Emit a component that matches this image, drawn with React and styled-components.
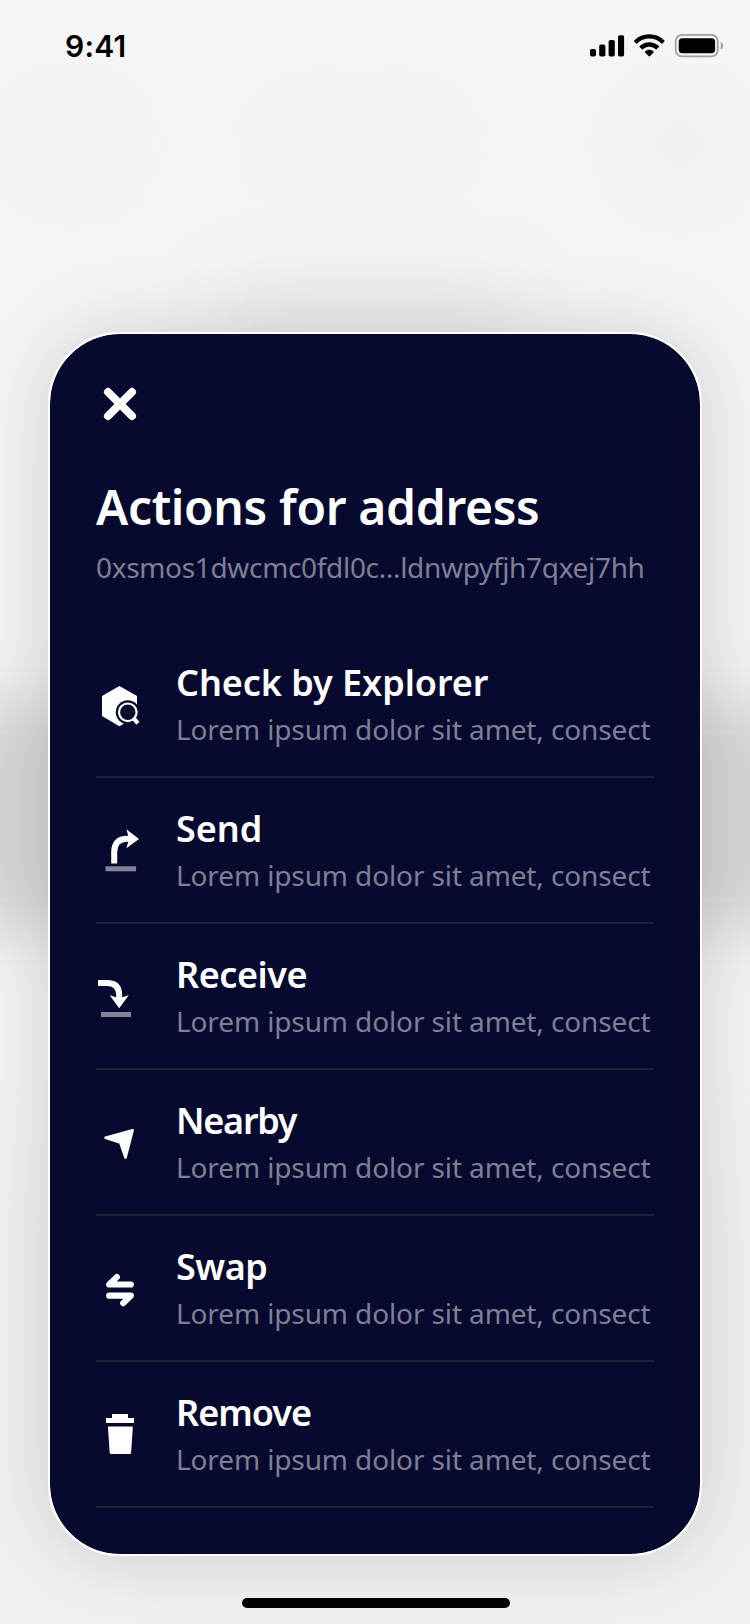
import React from "react";
import styled, { createGlobalStyle } from "styled-components";

const GlobalStyle = createGlobalStyle`
  *, *::before, *::after { box-sizing: border-box; }
  body { margin: 0; background: #f5f5f5; }
`;

const Screen = styled.main`
  position: relative;
  display: flex;
  flex-direction: column;
  width: 750px;
  height: 1624px;
  overflow: hidden;
  background: #f5f5f5;
  font-family: "Noto Sans", "Open Sans", sans-serif;
`;

/* Soft, out-of-focus content of the page that lies under the sheet. */
const Backdrop = styled.div`
  position: absolute;
  inset: 0;
  overflow: hidden;
`;

const Blob = styled.div`
  position: absolute;
  left: ${(p) => p.$x}px;
  top: ${(p) => p.$y}px;
  width: ${(p) => p.$w}px;
  height: ${(p) => p.$h}px;
  border-radius: ${(p) => p.$r || 0}px;
  background: ${(p) => p.$color};
  filter: blur(${(p) => p.$blur}px);
`;

const StatusBar = styled.header`
  position: relative;
  display: flex;
  align-items: center;
  justify-content: space-between;
  height: 92px;
  padding: 0 26px 0 65px;
`;

const Time = styled.time`
  color: #000;
  font: 600 30px/36px Inter, sans-serif;
  letter-spacing: 0.2px;
`;

const StatusIcons = styled.svg`
  display: block;
  width: 134px;
  height: 24px;
`;

const Sheet = styled.section`
  position: relative;
  width: 654px;
  height: 1224px;
  margin: 240px 48px 0;
  padding: 46px;
  border: 2px solid #fff;
  border-radius: 72px;
  background: #08092e;
  background-clip: padding-box;
  box-shadow: 0 0 80px rgba(0, 0, 0, 0.16);
`;

const CloseButton = styled.button`
  display: block;
  width: 48px;
  height: 48px;
  padding: 0;
  border: 0;
  background: none;
  color: #fff;
`;

const Title = styled.h1`
  margin: 49px 0 0;
  color: #fff;
  font-size: 48px;
  font-weight: 600;
  line-height: 60px;
  letter-spacing: -0.35px;
  white-space: nowrap;
`;

const Address = styled.p`
  margin: 10px 0 0;
  color: #7e7f94;
  font-size: 28px;
  font-weight: 400;
  line-height: 40px;
  letter-spacing: -0.33px;
  white-space: nowrap;
`;

const ActionList = styled.ul`
  margin: 45px 0 0;
  padding: 0;
  list-style: none;
`;

const ActionRow = styled.li`
  display: grid;
  grid-template-columns: 80px 1fr;
  height: 146px;
  padding-top: 29px;
  border-bottom: 2px solid #1f1f35;
`;

const ActionIcon = styled.svg`
  display: block;
  width: 48px;
  height: 48px;
  margin-top: 21px;
  overflow: visible;
`;

const ActionTitle = styled.h2`
  margin: 0;
  color: #fff;
  font-size: 36px;
  font-weight: 600;
  line-height: 44px;
  letter-spacing: ${(p) => p.$tracking}px;
  white-space: nowrap;
`;

const ActionText = styled.p`
  margin: 2px 0 0;
  color: #7e7f94;
  font-size: 28px;
  font-weight: 400;
  line-height: 44px;
  letter-spacing: -0.12px;
  white-space: nowrap;
`;

const HomeIndicator = styled.div`
  position: relative;
  width: 268px;
  height: 10px;
  margin: 42px 0 0 242px;
  border-radius: 5px;
  background: #000;
`;

const icons = {
  explorer: (
    <>
      <path fill="#fff" d="M23.4 4 41 14v20L23.4 44.3 6 34V14z" />
      <circle cx="31.8" cy="30.3" r="12" fill="#08092e" />
      <path d="m38 36.5 5 5" stroke="#08092e" strokeWidth="8" />
      <circle cx="31.8" cy="30.3" r="8.8" fill="none" stroke="#fff" strokeWidth="2.2" />
      <path d="m37.5 36 4.4 5.4" stroke="#fff" strokeWidth="4.2" />
    </>
  ),
  send: (
    <>
      <path fill="none" stroke="#fff" strokeWidth="6" d="M18.2 35.4V24q0-13.2 13-13.2h3" />
      <path fill="#fff" d="M30.4 1.3 43 11 30.4 20.3l2.7-9.5z" />
      <path fill="#83849a" d="M9.5 38.3h30.6v5H9.5z" />
    </>
  ),
  receive: (
    <>
      <path fill="none" stroke="#fff" strokeWidth="6" d="M2 9h8.8q12.4 0 12.4 12V26" />
      <path fill="#fff" d="m13.7 21.2 9.5 3 9.5-3L23.2 34.2z" />
      <path fill="#83849a" d="M5 38h30v5H5z" />
    </>
  ),
  nearby: (
    <path
      fill="#fff"
      stroke="#fff"
      strokeWidth="2.6"
      strokeLinejoin="round"
      d="M9.5 17.7 36.6 10.3 29.5 37.6 24.2 22.4z"
    />
  ),
  swap: (
    <>
      <path fill="none" stroke="#fff" strokeWidth="6.2" strokeLinecap="round" strokeLinejoin="round" d="M34.8 18.5H13.2l7.6-7.4" />
      <path fill="none" stroke="#fff" strokeWidth="6.2" strokeLinecap="round" strokeLinejoin="round" d="M13.2 29.7h21.6l-7.6 7.4" />
    </>
  ),
  remove: (
    <>
      <path fill="#fff" d="M16 2h16v4h6v5H10V6h6z" />
      <path fill="#fff" d="M12 14.5h23.7q1.2 0 1.1 1.2l-1.7 25q-.1 1.3-1.5 1.3H15.2q-1.4 0-1.5-1.3l-1.7-25q-.1-1.2 0-1.2z" />
    </>
  ),
};

const description = "Lorem ipsum dolor sit amet, consect";

const actions = [
  { icon: "explorer", title: "Check by Explorer", tracking: -0.05 },
  { icon: "send", title: "Send", tracking: -0.05 },
  { icon: "receive", title: "Receive", tracking: -0.45 },
  { icon: "nearby", title: "Nearby", tracking: -1.25 },
  { icon: "swap", title: "Swap", tracking: -0.5 },
  { icon: "remove", title: "Remove", tracking: -1 },
];

export default function App() {
  return (
    <Screen>
      <GlobalStyle />
      <Backdrop>
        <Blob $x={40} $y={110} $w={68} $h={68} $r={34} $color="#f0f0f0" $blur={30} />
        <Blob $x={280} $y={118} $w={160} $h={50} $r={25} $color="#efefef" $blur={26} />
        <Blob $x={645} $y={110} $w={70} $h={70} $r={35} $color="#ececec" $blur={30} />
        <Blob $x={225} $y={280} $w={290} $h={80} $color="#e9e9ec" $blur={34} />
        <Blob $x={-100} $y={701} $w={950} $h={230} $color="#d6d6da" $blur={32} />
        <Blob $x={-100} $y={1150} $w={950} $h={620} $color="#f1f1f1" $blur={40} />
      </Backdrop>
      <StatusBar>
        <Time>9:41</Time>
        <StatusIcons viewBox="590 34 134 24">
          <rect x="590" y="49" width="6" height="7.6" rx="1.8" />
          <rect x="599.2" y="44.6" width="6.2" height="12" rx="1.8" />
          <rect x="608.6" y="40" width="6.2" height="16.6" rx="1.8" />
          <rect x="618" y="35.2" width="6.1" height="21.4" rx="1.8" />
          <path d="M649.3 34.3c5.9 0 11.1 2.2 15.1 6.3q.5.5 0 1l-2 2q-.5.5-1 0c-3.2-3.2-7.4-5-12.1-5s-8.9 1.8-12.1 5q-.5.5-1 0l-2-2q-.5-.5 0-1c4-4.1 9.2-6.3 15.1-6.3z" />
          <path d="M649.3 42.2c3.6 0 7 1.4 9.6 3.9q.5.5 0 1l-2.2 2.2q-.5.5-1 0c-1.8-1.6-4-2.5-6.4-2.5s-4.6.9-6.4 2.5q-.5.5-1 0l-2.2-2.2q-.5-.5 0-1c2.6-2.5 6-3.9 9.6-3.9z" />
          <path d="M649.3 49.8c1.6 0 3.1.6 4.2 1.6q.5.5 0 1l-3.7 3.9q-.5.5-1 0l-3.7-3.9q-.5-.5 0-1c1.1-1 2.6-1.6 4.2-1.6z" />
          <rect x="675.7" y="34.9" width="42" height="21.5" rx="6.2" fill="none" stroke="#a1a1a1" strokeWidth="1.8" />
          <rect x="678.7" y="38.3" width="36.4" height="14.9" rx="3.6" />
          <path fill="#a1a1a1" d="M720.7 42v7.5c1.6-.6 2.6-2.1 2.6-3.75s-1-3.15-2.6-3.75z" />
        </StatusIcons>
      </StatusBar>
      <Sheet>
        <CloseButton aria-label="Close">
          <svg width="48" height="48" viewBox="0 0 48 48">
            <path d="M12 12 36 36M36 12 12 36" stroke="currentColor" strokeWidth="8" strokeLinecap="round" />
          </svg>
        </CloseButton>
        <Title>Actions for address</Title>
        <Address>0xsmos1dwcmc0fdl0c...ldnwpyfjh7qxej7hh</Address>
        <ActionList>
          {actions.map(({ icon, title, tracking }) => (
            <ActionRow key={title}>
              <ActionIcon viewBox="0 0 48 48">{icons[icon]}</ActionIcon>
              <div>
                <ActionTitle $tracking={tracking}>{title}</ActionTitle>
                <ActionText>{description}</ActionText>
              </div>
            </ActionRow>
          ))}
        </ActionList>
      </Sheet>
      <HomeIndicator />
    </Screen>
  );
}
